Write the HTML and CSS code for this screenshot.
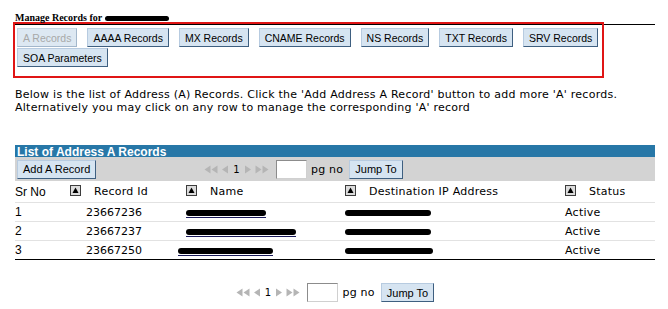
FILE: index.html
```html
<!DOCTYPE html>
<html>
<head>
	<meta charset="UTF-8" />
	<title>Manage Records</title>
	<link rel="stylesheet" href="styles.css">
</head>
<body>
<div class="page">

    <div class="head">Manage Records for <span class="blot blot-title"></span></div>

    <div class="types">
        <div class="types_row">
            <button class="tab" disabled>A Records</button>
            <button class="tab">AAAA Records</button>
            <button class="tab">MX Records</button>
            <button class="tab">CNAME Records</button>
            <button class="tab">NS Records</button>
            <button class="tab">TXT Records</button>
            <button class="tab">SRV Records</button>
        </div>
        <div class="types_row">
            <button class="tab">SOA Parameters</button>
        </div>
    </div>

    <p class="intro">Below is the list of Address (A) Records. Click the 'Add Address A Record' button to add more 'A' records.<br>Alternatively you may click on any row to manage the corresponding 'A' record</p>

    <div class="grid">
        <div class="grid_title">List of Address A Records</div>
        <div class="grid_bar">
            <button class="tab">Add A Record</button>
            <div class="pager pager_top">
                <span class="arrows">
                    <svg width="14" height="9" viewBox="0 0 14 9"><path d="M6.5 0.5L0.5 4.5 6.5 8.5zM13.5 0.5L7.5 4.5 13.5 8.5z"/></svg>
                    <svg width="8" height="9" viewBox="0 0 8 9"><path d="M7 0.5L1 4.5 7 8.5z"/></svg>
                    <span class="pg_num">1</span>
                    <svg width="8" height="9" viewBox="0 0 8 9"><path d="M1 0.5L7 4.5 1 8.5z"/></svg>
                    <svg width="14" height="9" viewBox="0 0 14 9"><path d="M0.5 0.5L6.5 4.5 0.5 8.5zM7.5 0.5L13.5 4.5 7.5 8.5z"/></svg>
                </span>
                <input class="pg_input" type="text" />
                <span class="pg_label">pg no</span>
                <button class="tab">Jump To</button>
            </div>
        </div>

        <table class="records">
            <colgroup>
                <col class="c_sr"><col class="c_id"><col class="c_name"><col class="c_ip"><col class="c_status">
            </colgroup>
            <tr>
                <th class="sr">Sr No</th>
                <th><span class="sort"><svg width="11" height="11" viewBox="0 0 11 11"><rect x="0.5" y="0.5" width="10" height="10" fill="#dcdcdc" stroke="#3c3c3c"/><path d="M5.5 2.5L8.5 8H2.5z" fill="#000"/></svg></span>Record Id</th>
                <th><span class="sort"><svg width="11" height="11" viewBox="0 0 11 11"><rect x="0.5" y="0.5" width="10" height="10" fill="#dcdcdc" stroke="#3c3c3c"/><path d="M5.5 2.5L8.5 8H2.5z" fill="#000"/></svg></span>Name</th>
                <th><span class="sort"><svg width="11" height="11" viewBox="0 0 11 11"><rect x="0.5" y="0.5" width="10" height="10" fill="#dcdcdc" stroke="#3c3c3c"/><path d="M5.5 2.5L8.5 8H2.5z" fill="#000"/></svg></span>Destination IP Address</th>
                <th><span class="sort"><svg width="11" height="11" viewBox="0 0 11 11"><rect x="0.5" y="0.5" width="10" height="10" fill="#dcdcdc" stroke="#3c3c3c"/><path d="M5.5 2.5L8.5 8H2.5z" fill="#000"/></svg></span>Status</th>
            </tr>
            <tr>
                <td class="sr">1</td>
                <td class="rid">23667236</td>
                <td><a href="#" class="name_link"><span class="blot" style="width:80px"></span></a></td>
                <td><span class="blot" style="width:86px"></span></td>
                <td>Active</td>
            </tr>
            <tr>
                <td class="sr">2</td>
                <td class="rid">23667237</td>
                <td><a href="#" class="name_link"><span class="blot" style="width:110px"></span></a></td>
                <td><span class="blot" style="width:86px"></span></td>
                <td>Active</td>
            </tr>
            <tr class="last">
                <td class="sr">3</td>
                <td class="rid">23667250</td>
                <td><a href="#" class="name_link shift"><span class="blot" style="width:95px"></span></a></td>
                <td><span class="blot" style="width:88px"></span></td>
                <td>Active</td>
            </tr>
        </table>
    </div>

    <div class="pager pager_bottom">
        <span class="arrows">
            <svg width="14" height="9" viewBox="0 0 14 9"><path d="M6.5 0.5L0.5 4.5 6.5 8.5zM13.5 0.5L7.5 4.5 13.5 8.5z"/></svg>
            <svg width="8" height="9" viewBox="0 0 8 9"><path d="M7 0.5L1 4.5 7 8.5z"/></svg>
            <span class="pg_num">1</span>
            <svg width="8" height="9" viewBox="0 0 8 9"><path d="M1 0.5L7 4.5 1 8.5z"/></svg>
            <svg width="14" height="9" viewBox="0 0 14 9"><path d="M0.5 0.5L6.5 4.5 0.5 8.5zM7.5 0.5L13.5 4.5 7.5 8.5z"/></svg>
        </span>
        <input class="pg_input" type="text" />
        <span class="pg_label">pg no</span>
        <button class="tab">Jump To</button>
    </div>

</div>
</body>
</html>
```

FILE: styles.css
```css
body{
    margin: 0;
    font: 11px "DejaVu Sans", Verdana, sans-serif;
    letter-spacing: 0.25px;
    color: #000;
    background: #fff;
}

.page{
    width: 640px;
    padding: 11px 0 0 15px;
}

.head{
    font: bold 10px "Liberation Serif", "Times New Roman", serif;
    letter-spacing: 0;
    line-height: 13px;
    height: 13px;
    border-bottom: 1px solid #000;
}

.blot{
    display: inline-block;
    height: 6px;
    background: #000;
    border-radius: 3px;
    vertical-align: middle;
}

.blot-title{
    width: 64px;
    height: 5px;
}

.types{
    display: flex;
    flex-direction: column;
    gap: 1px;
    width: 585px;
    margin: -3px 0 0 -2px;
    padding: 4px 0 9px 2px;
    border: 2px solid #e01515;
}

.types_row{
    display: flex;
    gap: 10px;
}

.tab{
    flex-shrink: 0;
    white-space: nowrap;
    font: 11px "Liberation Sans", Tahoma, Arial, sans-serif;
    letter-spacing: 0;
    height: 19px;
    padding: 0 5px;
    background: #d6e4f1;
    color: #000;
    border: 1px solid;
    border-color: #b7cbe0 #3e5f80 #3e5f80 #b7cbe0;
    cursor: pointer;
}

.types .tab{
    font-size: 10.5px;
    padding: 0 5px;
}

.tab:disabled{
    color: #a8a8a8;
    background: #dde8f2;
    border-color: #c6d5e4 #a3b7cb #a3b7cb #c6d5e4;
}

.intro{
    margin: 10px 0 0;
    line-height: 13px;
}

.grid{
    margin-top: 31px;
}

.grid_title{
    height: 12px;
    line-height: 12px;
    padding-left: 2px;
    background: #2777a7;
    color: #fff;
    font: bold 12px "Liberation Sans", Tahoma, sans-serif;
    letter-spacing: 0;
}

.grid_bar{
    display: flex;
    align-items: center;
    height: 24px;
    padding-left: 2px;
    background: #d3d3d3;
}

.pager{
    display: flex;
    align-items: center;
}

.pager_top{
    margin-left: 108px;
}

.pager_bottom{
    justify-content: center;
    margin-top: 23px;
}

.arrows{
    display: flex;
    align-items: center;
    gap: 3px;
    fill: #b5b5b5;
}

.pg_num{
    color: #000;
    font-size: 10px;
    padding: 0 1px;
}

.pg_input{
    width: 25px;
    height: 15px;
    margin-left: 7px;
    border: 1px solid #9a9a9a;
    border-color: #8c8c8c #d0d0d0 #d0d0d0 #8c8c8c;
    background: #fff;
    padding: 1px 2px;
}

.pg_label{
    margin: 0 6px 0 4px;
}

.records{
    width: 640px;
    border-collapse: collapse;
    table-layout: fixed;
}

.c_sr{ width: 55px; }
.c_id{ width: 116px; }
.c_name{ width: 159px; }
.c_ip{ width: 220px; }
.c_status{ width: 90px; }

.records th{
    height: 21px;
    padding: 0;
    text-align: left;
    font-weight: normal;
    border-bottom: 1px solid #e2e2e2;
}

.records td{
    height: 18px;
    padding: 0;
    border-bottom: 1px solid #e2e2e2;
}

.records .last td{
    border-bottom-color: #000;
}

.records .sr{
    font: 12px "Liberation Sans", Tahoma, Arial, sans-serif;
    letter-spacing: 0;
}

.sort{
    display: inline-block;
    width: 24px;
    vertical-align: -1px;
}

.sort svg{
    display: block;
}

.records .rid{
    padding-left: 16px;
    letter-spacing: 0;
}

.name_link{
    color: #000;
    text-decoration: none;
    border-bottom: 1px solid #1a1a5a;
    display: inline-block;
    line-height: 8px;
}

.name_link.shift{
    margin-left: -8px;
}
```
